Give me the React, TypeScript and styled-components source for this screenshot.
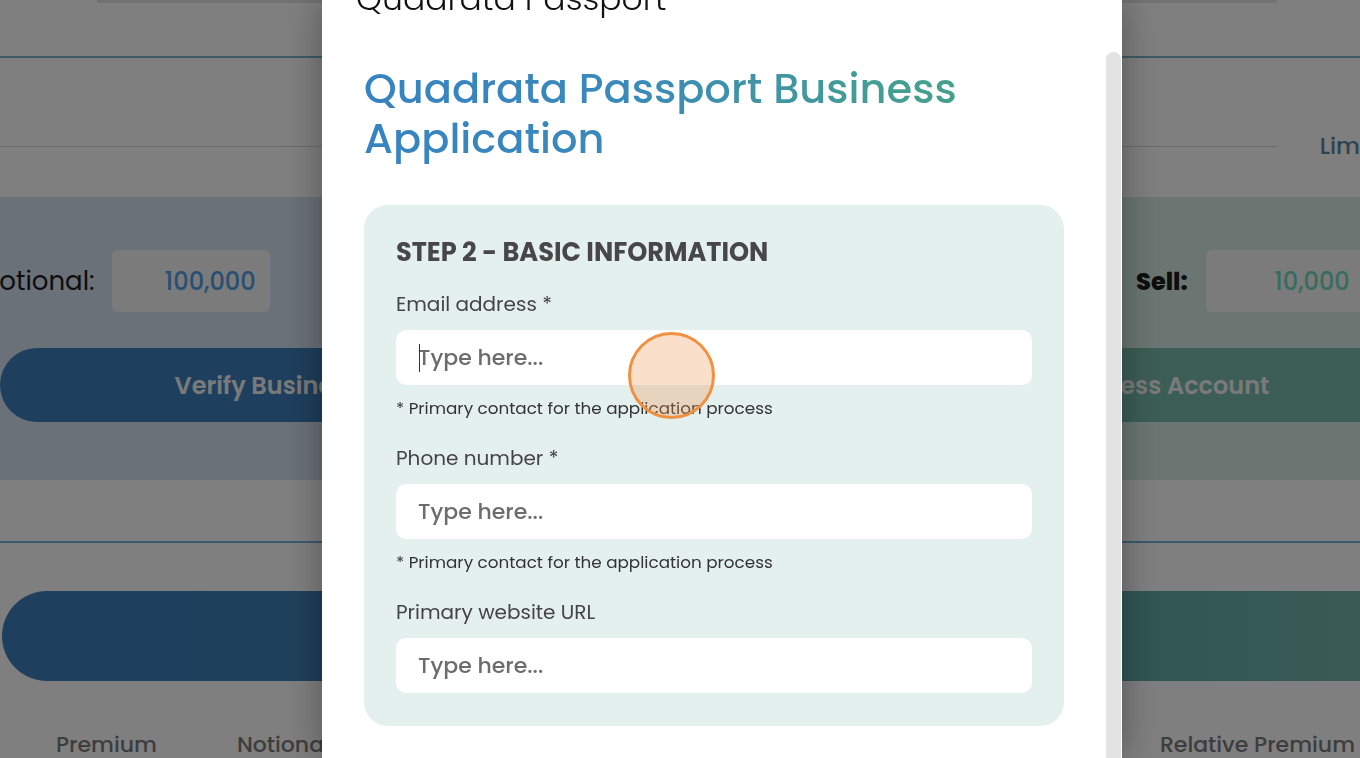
import React from "react";
import styled, { createGlobalStyle } from "styled-components";

const FONT = `"Poppins", "Inter", "Noto Sans", "Liberation Sans", sans-serif`;

const GlobalStyle = createGlobalStyle`
  html, body {
    margin: 0;
    padding: 0;
    width: 100%;
    height: 100%;
    overflow: hidden;
    background: #ffffff;
    font-family: ${FONT};
  }
  #root { height: 100%; }
  * { box-sizing: border-box; }
`;

/* ---------- background page (behind the overlay) ---------- */

const Page = styled.div`
  width: 1360px;
  height: 758px;
  overflow: hidden;
  display: flex;
  flex-direction: column;
  background: #ffffff;
`;

const TopStrip = styled.div`
  height: 3px;
  margin-left: 97px;
  width: 1180px;
  background: #e4e4e4;
  border-radius: 0 0 6px 6px;
  flex-shrink: 0;
`;

const Rule = styled.div<{ $top: number; $h: number; $color: string }>`
  margin-top: ${(p) => p.$top}px;
  height: ${(p) => p.$h}px;
  background: ${(p) => p.$color};
  flex-shrink: 0;
`;

const LimitRow = styled.div`
  margin-top: 73px;
  height: 30px;
  display: flex;
  align-items: center;
  gap: 42px;
  margin-right: -86px;
  flex-shrink: 0;
`;

const LimitLine = styled.div`
  flex: 1;
  height: 1px;
  background: #d8d8d8;
`;

const LimitText = styled.span`
  font-size: 23px;
  font-weight: 500;
  color: #62829a;
  white-space: nowrap;
`;

const Panels = styled.div`
  margin-top: 36px;
  height: 283px;
  display: grid;
  grid-template-columns: 650px 950px;
  flex-shrink: 0;
`;

const TradePanel = styled.div<{ $bg: string }>`
  background: ${(p) => p.$bg};
  padding: 53px 0 0 0;
  display: flex;
  flex-direction: column;
  gap: 36px;
`;

const FieldRow = styled.div<{ $offset: number; $gap: number }>`
  display: flex;
  align-items: center;
  gap: ${(p) => p.$gap}px;
  height: 62px;
  margin-left: ${(p) => p.$offset}px;
`;

const TradeLabel = styled.span<{ $bold?: boolean }>`
  font-size: ${(p) => (p.$bold ? 24 : 26)}px;
  font-weight: ${(p) => (p.$bold ? 800 : 400)};
  color: #1c1c1c;
  white-space: nowrap;
`;

const TradeInput = styled.div<{ $color: string }>`
  width: 158px;
  height: 62px;
  border-radius: 6px;
  background: #f6f6f6;
  display: flex;
  align-items: center;
  justify-content: flex-end;
  padding-right: 14px;
  font-size: 24px;
  font-weight: 500;
  color: ${(p) => p.$color};
`;

const TradeButton = styled.div<{ $bg: string; $width: number }>`
  width: ${(p) => p.$width}px;
  height: 74px;
  border-radius: 37px;
  background: ${(p) => p.$bg};
  display: flex;
  align-items: center;
  justify-content: center;
  color: #f4f4f4;
  font-size: 24px;
  font-weight: 600;
  white-space: nowrap;
`;

const BigPill = styled.div`
  margin-top: 48px;
  margin-left: 2px;
  width: 1450px;
  height: 90px;
  border-radius: 45px;
  flex-shrink: 0;
  background: linear-gradient(90deg, #3c7ebc 0%, #3f82b4 40%, #5aa6a6 70%, #78bcac 100%);
`;

const HeaderRow = styled.div`
  margin-top: 48px;
  height: 30px;
  display: flex;
  align-items: center;
  padding-left: 56px;
  gap: 80px;
  margin-right: 5px;
  flex-shrink: 0;
`;

const ColHead = styled.span<{ $push?: boolean }>`
  font-size: 22px;
  font-weight: 500;
  color: #7a7a7a;
  white-space: nowrap;
  margin-left: ${(p) => (p.$push ? "auto" : "0")};
`;

const Overlay = styled.div`
  position: fixed;
  inset: 0;
  background: rgba(0, 0, 0, 0.5);
`;

/* ---------- modal ---------- */

const Modal = styled.div`
  position: fixed;
  top: 0;
  left: 322px;
  width: 800px;
  height: 758px;
  background: #ffffff;
  box-shadow: 0 0 36px rgba(0, 0, 0, 0.35);
  display: flex;
  overflow: hidden;
`;

const ModalScroll = styled.div`
  width: 784px;
  display: flex;
  flex-direction: column;
  padding: 0 42px;
`;

const ScrollTrack = styled.div`
  width: 16px;
  display: flex;
  flex-direction: column;
`;

const ScrollThumb = styled.div`
  margin-top: 52px;
  flex: 1;
  width: 15px;
  background: #e3e3e3;
  border-radius: 8px 8px 0 0;
`;

const ModalHeader = styled.div`
  margin-top: -21px;
  margin-left: -8px;
  font-size: 33px;
  line-height: 40px;
  font-weight: 300;
  color: #111;
  white-space: nowrap;
`;

const Title = styled.h1`
  margin: 45px 0 0 0;
  font-size: 41.6px;
  line-height: 50px;
  font-weight: 500;
  width: 600px;
  background: linear-gradient(90deg, #3783c1 0%, #3a89bb 42%, #449d93 85%, #47a08b 100%);
  -webkit-background-clip: text;
  background-clip: text;
  color: transparent;
`;

const Card = styled.section`
  margin-top: 41px;
  background: #e4f0ee;
  border-radius: 24px;
  padding: 31px 32px 33px 32px;
  display: flex;
  flex-direction: column;
`;

const StepHeading = styled.h2`
  margin: 0 0 23px 0;
  font-size: 25.6px;
  line-height: 32px;
  font-weight: 700;
  color: #474747;
`;

const FieldGroup = styled.div<{ $last?: boolean }>`
  display: flex;
  flex-direction: column;
  margin-bottom: ${(p) => (p.$last ? 0 : 26)}px;
`;

const Label = styled.label`
  font-size: 20px;
  line-height: 26px;
  color: #444;
  margin-bottom: 13px;
`;

const InputWrap = styled.div`
  position: relative;
  height: 55px;
`;

const Input = styled.input`
  width: 100%;
  height: 55px;
  border: none;
  outline: none;
  border-radius: 10px;
  background: #ffffff;
  padding: 0 22px;
  font-family: ${FONT};
  font-size: 22px;
  font-weight: 500;
  color: #333;
  &::placeholder {
    color: #6c6c6c;
    opacity: 1;
  }
`;

const Caret = styled.span`
  position: absolute;
  left: 23px;
  top: 14px;
  width: 1px;
  height: 28px;
  background: #333;
`;

const Hint = styled.p`
  margin: 12px 0 0 0;
  font-size: 16.8px;
  line-height: 22px;
  color: #333;
`;

const ClickMarker = styled.div`
  position: fixed;
  left: 628px;
  top: 332px;
  width: 87px;
  height: 87px;
  border-radius: 50%;
  border: 3px solid #ef9142;
  background: rgba(240, 150, 80, 0.3);
`;

export default function App() {
  return (
    <>
      <GlobalStyle />
      <Page>
        <TopStrip />
        <Rule $top={53} $h={2} $color="#7cb6cc" />
        <LimitRow>
          <LimitLine />
          <LimitText>Limit Order</LimitText>
        </LimitRow>
        <Panels>
          <TradePanel $bg="#d6e2f2">
            <FieldRow $offset={-19} $gap={17}>
              <TradeLabel>Notional:</TradeLabel>
              <TradeInput $color="#4e9ee6">100,000</TradeInput>
            </FieldRow>
            <TradeButton $bg="#3c7ebc" $width={642}>
              Verify Business Account
            </TradeButton>
          </TradePanel>
          <TradePanel $bg="#d6ece4">
            <FieldRow $offset={486} $gap={18}>
              <TradeLabel $bold>Sell:</TradeLabel>
              <TradeInput $color="#70d8bc">10,000</TradeInput>
            </FieldRow>
            <TradeButton $bg="#78bcac" $width={946}>
              Verify Business Account
            </TradeButton>
          </TradePanel>
        </Panels>
        <Rule $top={61} $h={2} $color="#76b4dc" />
        <BigPill />
        <HeaderRow>
          <ColHead>Premium</ColHead>
          <ColHead>Notional</ColHead>
          <ColHead $push>Relative Premium</ColHead>
        </HeaderRow>
      </Page>
      <Overlay />
      <Modal>
        <ModalScroll>
          <ModalHeader>Quadrata Passport</ModalHeader>
          <Title>Quadrata Passport Business Application</Title>
          <Card>
            <StepHeading>STEP 2 - BASIC INFORMATION</StepHeading>
            <FieldGroup>
              <Label>Email address *</Label>
              <InputWrap>
                <Input placeholder="Type here..." />
                <Caret />
              </InputWrap>
              <Hint>* Primary contact for the application process</Hint>
            </FieldGroup>
            <FieldGroup>
              <Label>Phone number *</Label>
              <InputWrap>
                <Input placeholder="Type here..." />
              </InputWrap>
              <Hint>* Primary contact for the application process</Hint>
            </FieldGroup>
            <FieldGroup $last>
              <Label>Primary website URL</Label>
              <InputWrap>
                <Input placeholder="Type here..." />
              </InputWrap>
            </FieldGroup>
          </Card>
        </ModalScroll>
        <ScrollTrack>
          <ScrollThumb />
        </ScrollTrack>
      </Modal>
      <ClickMarker />
    </>
  );
}
